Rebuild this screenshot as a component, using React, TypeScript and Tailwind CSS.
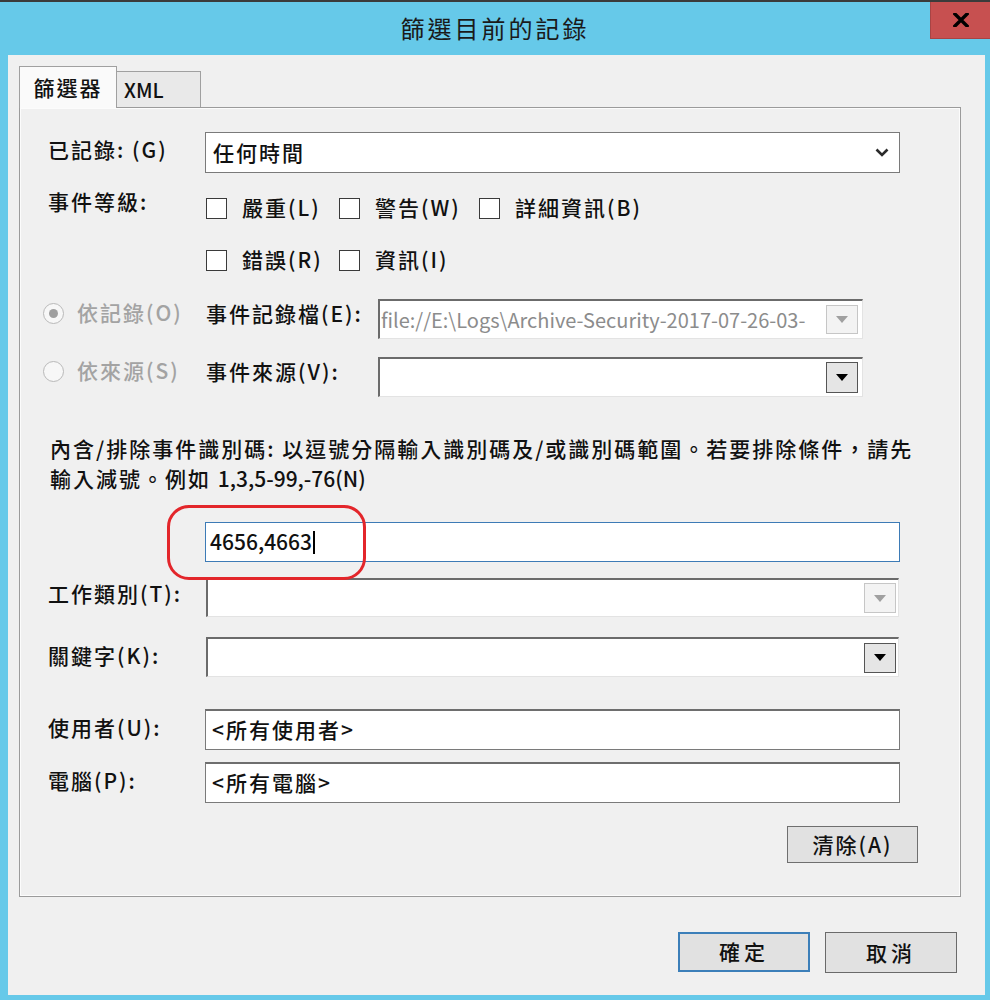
import React from "react";

function Triangle({ color }: { color: string }) {
  return (
    <svg width="12" height="7" viewBox="0 0 12 7">
      <polygon points="0,0 12,0 6,7" fill={color} />
    </svg>
  );
}

function DropButton({ enabled, h = "h-[30px]" }: { enabled: boolean; h?: string }) {
  return (
    <div
      className={`w-[32px] ${h} shrink-0 border flex items-center justify-center ${
        enabled ? "border-[#555] bg-[#e5e5e5]" : "border-[#c6c6c6] bg-[#f3f3f3]"
      }`}
    >
      <Triangle color={enabled ? "#000" : "#a0a0a0"} />
    </div>
  );
}

const sunken =
  "bg-white border-t-2 border-l-2 border-b border-r border-t-[#6b6b6b] border-l-[#6b6b6b] border-b-[#e3e3e3] border-r-[#e3e3e3]";

function CheckItem({ label }: { label: string }) {
  return (
    <div className="flex items-center h-[34px] gap-[15px]">
      <div className="w-[21px] h-[21px] bg-white border-[1.5px] border-[#3a3a3a]" />
      <span>{label}</span>
    </div>
  );
}

function Radio({ checked, label }: { checked: boolean; label: string }) {
  return (
    <div className="flex items-center h-[28px] gap-[13px] -ml-[5px] w-[163px] text-[#a3a3a3]">
      <div className="w-[21px] h-[21px] rounded-full border-[1.5px] border-[#b9b9b9] bg-[#f7f7f7] flex items-center justify-center">
        {checked && <div className="w-[9px] h-[9px] rounded-full bg-[#9f9f9f]" />}
      </div>
      <span>{label}</span>
    </div>
  );
}

export default function App() {
  return (
    <div
      lang="zh-Hant-TW"
      className="w-[990px] h-[1000px] bg-[#66c9e9] font-[family-name:Noto_Sans_CJK_TC,sans-serif] font-medium text-[21px] text-[#111] tracking-[2px] overflow-hidden"
    >
      {/* title bar */}
      <div className="h-[55px] border-t-2 border-[#3b3b3b] flex items-start">
        <div className="w-[60px]" />
        <div className="flex-1 text-center text-[24px] font-normal tracking-[3px] leading-[52px] text-[#1a1a1a]">
          篩選目前的記錄
        </div>
        <div className="w-[60px] h-[37px] bg-[#c75050] border-l border-b border-[#a84444] flex items-center justify-center">
          <svg width="16" height="14" viewBox="0 0 16 14">
            <path d="M2 1 L14 13 M14 1 L2 13" stroke="#000" strokeWidth="3.4" strokeLinecap="square" />
          </svg>
        </div>
      </div>

      {/* body */}
      <div className="ml-[8px] mr-[5px] h-[940px] bg-[#f0f0f0] pl-[11px] pr-[24px] pt-[11px]">
        {/* tabs */}
        <div className="flex items-end relative z-10">
          <div className="h-[42px] w-[98px] -mb-px border border-b-0 border-[#a0a0a0] bg-[#fafafa] flex items-center justify-center">
            篩選器
          </div>
          <div className="h-[36px] w-[84px] border border-l-0 border-b-0 border-[#a0a0a0] bg-[#e9e9e9] flex items-center pl-[7px] tracking-normal text-[20px]">
            XML
          </div>
        </div>

        {/* panel */}
        <div className="border border-[#9b9b9b] shadow-[inset_0_0_0_1px_#fcfcfc] bg-[#f0f0f0] pl-[28px] pt-[24px] pb-[33px]">
          {/* 已記錄 */}
          <div className="flex items-start">
            <div className="w-[157px] leading-[34px]">已記錄: (G)</div>
            <div className="w-[695px] h-[41px] bg-white border border-[#7a7a7a] flex items-center justify-between pl-[7px] pr-[10px]">
              <span>任何時間</span>
              <svg width="14" height="9" viewBox="0 0 14 9">
                <polyline points="1.5,1.5 7,7 12.5,1.5" fill="none" stroke="#2b2b2b" strokeWidth="2.6" />
              </svg>
            </div>
          </div>

          {/* 事件等級 */}
          <div className="flex items-start mt-[11px]">
            <div className="w-[158px] leading-[34px]">事件等級:</div>
            <div className="mt-[7px] grid grid-cols-[133px_140px_auto] gap-y-[18px]">
              <CheckItem label="嚴重(L)" />
              <CheckItem label="警告(W)" />
              <CheckItem label="詳細資訊(B)" />
              <CheckItem label="錯誤(R)" />
              <CheckItem label="資訊(I)" />
            </div>
          </div>

          {/* 依記錄 */}
          <div className="flex items-start mt-[22px]">
            <Radio checked label="依記錄(O)" />
            <div className="w-[172px] leading-[28px]">事件記錄檔(E):</div>
            <div className={`w-[485px] h-[40px] ${sunken} flex items-center pl-[1px] pr-[4px]`}>
              <span className="flex-1 min-w-0 whitespace-nowrap text-[#8c8c8c] font-normal tracking-normal text-[20px]">
                file://E:\Logs\Archive-Security-2017-07-26-03-
              </span>
              <DropButton enabled={false} h="h-[29px]" />
            </div>
          </div>

          {/* 依來源 */}
          <div className="flex items-start mt-[18px]">
            <Radio checked={false} label="依來源(S)" />
            <div className="w-[172px] leading-[28px]">事件來源(V):</div>
            <div className={`w-[485px] h-[40px] ${sunken} flex items-center justify-end pr-[4px]`}>
              <DropButton enabled h="h-[31px]" />
            </div>
          </div>

          {/* 說明 */}
          <p className="mt-[36px] leading-[30px] pl-[2px]">
            內含/排除事件識別碼: 以逗號分隔輸入識別碼及/或識別碼範圍。若要排除條件，請先
            <br />
            輸入減號。例如 <span className="tracking-normal">1,3,5-99,-76(N)</span>
          </p>

          {/* 識別碼 */}
          <div className="relative mt-[29px] pl-[157px]">
            <div className="w-[695px] h-[40px] bg-white border-[1.5px] border-[#3d7bb6] flex items-center pl-[4px] tracking-normal">
              <span>4656,4663</span>
              <span className="inline-block w-[1.5px] h-[23px] bg-black ml-[1px]" />
            </div>
            <div className="absolute left-[119px] top-[-17px] w-[199px] h-[75px] rounded-[22px] border-[3px] border-[#e3262b]" />
          </div>

          {/* 工作類別 */}
          <div className="flex items-start mt-[16px]">
            <div className="w-[158px] leading-[30px]">工作類別(T):</div>
            <div className={`w-[693px] h-[39px] ${sunken} flex items-center justify-end pr-[2px]`}>
              <DropButton enabled={false} />
            </div>
          </div>

          {/* 關鍵字 */}
          <div className="flex items-start mt-[20px]">
            <div className="w-[158px] leading-[36px]">關鍵字(K):</div>
            <div className={`w-[693px] h-[40px] ${sunken} flex items-center justify-end pr-[2px]`}>
              <DropButton enabled />
            </div>
          </div>

          {/* 使用者 */}
          <div className="flex items-start mt-[32px]">
            <div className="w-[157px] leading-[36px]">使用者(U):</div>
            <div className="w-[695px] h-[41px] bg-white border border-[#7a7a7a] border-t-2 border-t-[#6e6e6e] flex items-center pl-[6px]">
              &lt;所有使用者&gt;
            </div>
          </div>

          {/* 電腦 */}
          <div className="flex items-start mt-[12px]">
            <div className="w-[157px] leading-[36px]">電腦(P):</div>
            <div className="w-[695px] h-[41px] bg-white border border-[#7a7a7a] border-t-2 border-t-[#6e6e6e] flex items-center pl-[6px]">
              &lt;所有電腦&gt;
            </div>
          </div>

          <div className="flex justify-end pr-[42px] mt-[23px]">
            <div className="w-[131px] h-[37px] bg-[#e1e1e1] border border-[#6f6f6f] flex items-center justify-center">
              清除(A)
            </div>
          </div>
        </div>

        {/* 確定 / 取消 */}
        <div className="flex justify-end gap-[15px] pr-[4px] mt-[35px]">
          <div className="w-[132px] h-[40px] bg-[#e1e1e1] border-2 border-[#3c7fb9] flex items-center justify-center tracking-[4px]">
            確定
          </div>
          <div className="w-[132px] h-[41px] bg-[#e1e1e1] border-[1.5px] border-[#6a6a6a] flex items-center justify-center tracking-[4px]">
            取消
          </div>
        </div>
      </div>
    </div>
  );
}
